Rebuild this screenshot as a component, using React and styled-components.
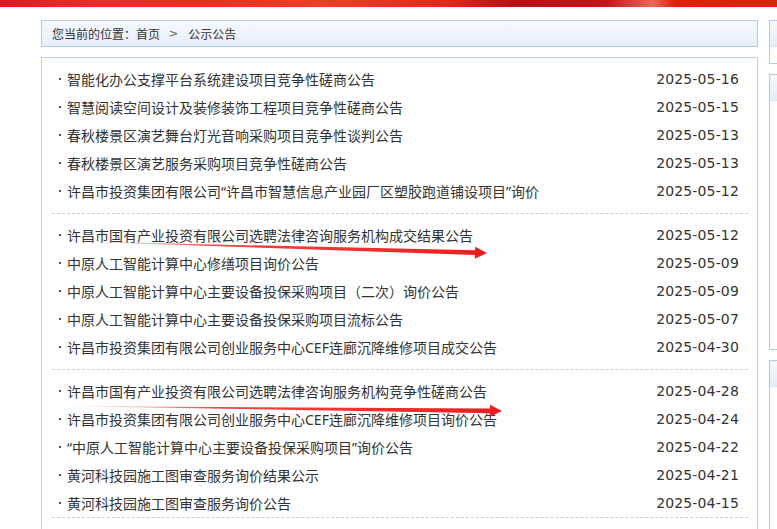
import React from 'react';
import styled, { createGlobalStyle } from 'styled-components';

const GlobalStyle = createGlobalStyle`
  html, body {
    margin: 0;
    padding: 0;
    background: #ffffff;
    overflow: hidden;
  }
  body {
    font-family: "Noto Sans CJK SC", "Noto Sans", sans-serif;
    color: #333333;
  }
`;

const Page = styled.div`
  position: relative;
  width: 777px;
  height: 529px;
  overflow: hidden;
`;

const Banner = styled.div`
  height: 7px;
  background: linear-gradient(
    90deg,
    #e01622 0%,
    #ec2a2a 10%,
    #f02c22 25%,
    #f03d26 42%,
    #e6251c 58%,
    #b80f16 66%,
    #c8121a 78%,
    #e86a5a 84%,
    #e21c0a 87%,
    #dc2406 100%
  );
`;

const Layout = styled.div`
  display: flex;
  gap: 11px;
  padding: 13px 0 0 41px;
  align-items: flex-start;
`;

const MainColumn = styled.div`
  width: 717px;
  flex-shrink: 0;
  display: flex;
  flex-direction: column;
  gap: 10px;
`;

const SideColumn = styled.div`
  width: 220px;
  flex-shrink: 0;
  display: flex;
  flex-direction: column;
  gap: 10px;
`;

const Breadcrumb = styled.div`
  box-sizing: border-box;
  height: 27px;
  border: 1px solid #aecbec;
  background: linear-gradient(180deg, #f6f9fe 0%, #e6eef9 100%);
  padding-left: 10px;
  font-size: 12px;
  line-height: 25px;
  color: #333;
  display: flex;
  align-items: center;
`;

const Crumb = styled.span`
  color: #333;
`;

const Sep = styled.span`
  margin: 0 10px 0 9px;
  color: #555;
  font-family: "DejaVu Sans", sans-serif;
  font-size: 11px;
`;

const ListBox = styled.div`
  box-sizing: border-box;
  border: 1px solid #b3d0ef;
  padding: 0 9px 0 10px;
  height: 600px;
`;

const Group = styled.ul`
  list-style: none;
  margin: 0;
  padding: 7px 0 ${(p) => (p.$last ? '0' : '8px')};
  border-bottom: 1px dashed #cfcfcf;
`;

const Row = styled.li`
  display: flex;
  align-items: center;
  height: 28px;
  padding: 0 9px 0 7px;
`;

const Dot = styled.span`
  width: 2px;
  height: 2px;
  background: #555;
  margin-right: 6px;
  flex-shrink: 0;
`;

const Title = styled.a`
  flex: 1;
  font-family: "Noto Sans", "Noto Sans CJK SC", sans-serif;
  font-size: 14px;
  color: #333;
  text-decoration: none;
  white-space: nowrap;
`;

const DateText = styled.span`
  font-family: "DejaVu Sans", "Verdana", sans-serif;
  font-size: 14px;
  color: #333;
  letter-spacing: 0.15px;
`;

const SideBox = styled.div`
  box-sizing: border-box;
  height: ${(p) => p.$h}px;
  border: 1px solid #aecbec;
`;

const SideHead = styled.div`
  height: 25px;
  background: linear-gradient(180deg, #f6f9fe 0%, #e3edf9 100%);
  border-bottom: 1px solid #d6e4f5;
`;

const ArrowLayer = styled.svg`
  position: absolute;
  left: 0;
  top: 0;
  pointer-events: none;
`;

const groups = [
  [
    ['智能化办公支撑平台系统建设项目竞争性磋商公告', '2025-05-16'],
    ['智慧阅读空间设计及装修装饰工程项目竞争性磋商公告', '2025-05-15'],
    ['春秋楼景区演艺舞台灯光音响采购项目竞争性谈判公告', '2025-05-13'],
    ['春秋楼景区演艺服务采购项目竞争性磋商公告', '2025-05-13'],
    ['许昌市投资集团有限公司“许昌市智慧信息产业园厂区塑胶跑道铺设项目”询价', '2025-05-12'],
  ],
  [
    ['许昌市国有产业投资有限公司选聘法律咨询服务机构成交结果公告', '2025-05-12'],
    ['中原人工智能计算中心修缮项目询价公告', '2025-05-09'],
    ['中原人工智能计算中心主要设备投保采购项目（二次）询价公告', '2025-05-09'],
    ['中原人工智能计算中心主要设备投保采购项目流标公告', '2025-05-07'],
    ['许昌市投资集团有限公司创业服务中心CEF连廊沉降维修项目成交公告', '2025-04-30'],
  ],
  [
    ['许昌市国有产业投资有限公司选聘法律咨询服务机构竞争性磋商公告', '2025-04-28'],
    ['许昌市投资集团有限公司创业服务中心CEF连廊沉降维修项目询价公告', '2025-04-24'],
    ['“中原人工智能计算中心主要设备投保采购项目”询价公告', '2025-04-22'],
    ['黄河科技园施工图审查服务询价结果公示', '2025-04-21'],
    ['黄河科技园施工图审查服务询价公告', '2025-04-15'],
  ],
];

// hand-drawn annotation arrow: tapered tail, small head
const Arrow = ({ x1, y1, x2, y2, id }) => {
  const head = 12;
  const dx = x2 - x1;
  const dy = y2 - y1;
  const len = Math.sqrt(dx * dx + dy * dy);
  const ux = dx / len;
  const uy = dy / len;
  const nx = -uy;
  const ny = ux;
  const bx = x2 - ux * head;
  const by = y2 - uy * head;
  const body = [
    [x1, y1],
    [bx + nx * 2.3, by + ny * 2.3],
    [bx - nx * 2.3, by - ny * 2.3],
  ];
  const tip = [
    [bx + nx * 6, by + ny * 6],
    [x2, y2],
    [bx - nx * 6, by - ny * 6],
  ];
  const pts = (a) => a.map((p) => p.join(',')).join(' ');
  return (
    <g>
      <defs>
        <linearGradient id={id} gradientUnits="userSpaceOnUse" x1={x1} y1={y1} x2={x2} y2={y2}>
          <stop offset="0" stopColor="#f5b0b0" stopOpacity="0.3" />
          <stop offset="0.35" stopColor="#f03030" stopOpacity="0.9" />
          <stop offset="1" stopColor="#ee1c1c" />
        </linearGradient>
      </defs>
      <polygon points={pts(body)} fill={`url(#${id})`} />
      <polygon points={pts(tip)} fill="#ee1c1c" />
    </g>
  );
};

export default function App() {
  return (
    <Page>
      <GlobalStyle />
      <Banner />
      <Layout>
        <MainColumn>
          <Breadcrumb>
            <Crumb>您当前的位置：首页</Crumb>
            <Sep>&gt;</Sep>
            <Crumb>公示公告</Crumb>
          </Breadcrumb>
          <ListBox>
            {groups.map((g, gi) => (
              <Group key={gi} $last={gi === groups.length - 1}>
                {g.map(([title, date]) => (
                  <Row key={title + date}>
                    <Dot />
                    <Title href="#">{title}</Title>
                    <DateText>{date}</DateText>
                  </Row>
                ))}
              </Group>
            ))}
          </ListBox>
        </MainColumn>
        <SideColumn>
          <SideBox $h={44}>
            <SideHead />
          </SideBox>
          <SideBox $h={276}>
            <SideHead />
          </SideBox>
          <SideBox $h={200}>
            <SideHead />
          </SideBox>
        </SideColumn>
      </Layout>
      <ArrowLayer width="777" height="529" viewBox="0 0 777 529">
        <Arrow id="a1" x1={63} y1={241} x2={487} y2={253} />
        <Arrow id="a2" x1={57} y1={406} x2={502} y2={411} />
      </ArrowLayer>
    </Page>
  );
}
